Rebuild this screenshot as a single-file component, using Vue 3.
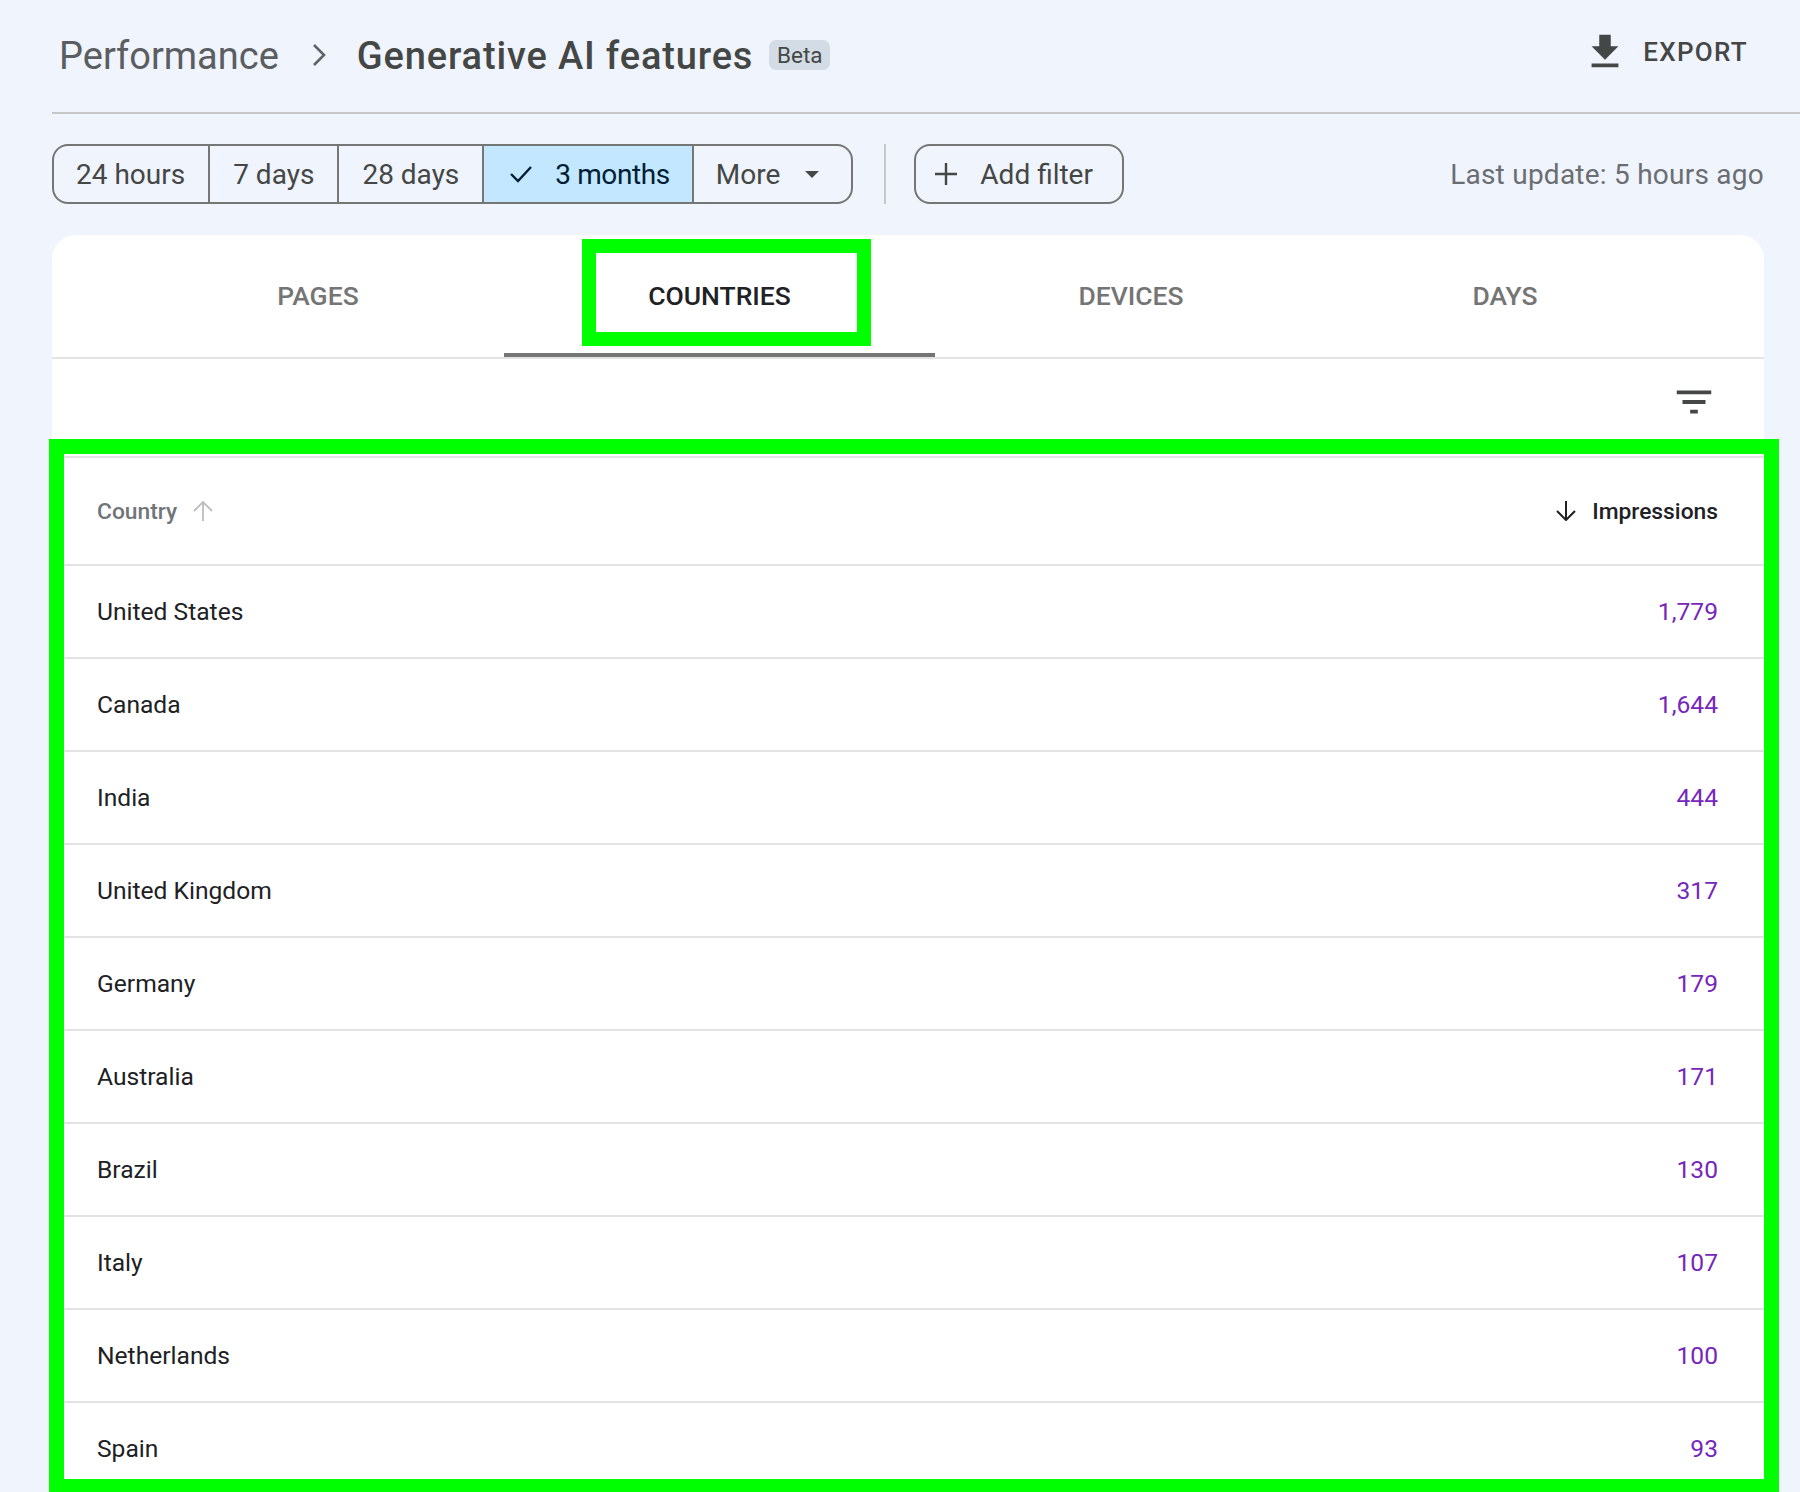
<template>
  <div class="page">
    <header class="head">
      <div class="crumbs">
        <span class="crumbs__root">Performance</span>
        <svg class="crumbs__chevron" viewBox="0 0 16 24" aria-hidden="true">
          <path d="M3 2l10 10L3 22" fill="none" stroke="#5f6368" stroke-width="2.6" />
        </svg>
        <span class="crumbs__title">Generative AI features</span>
        <span class="crumbs__chip">Beta</span>
      </div>
      <button class="export">
        <svg class="export__icon" viewBox="0 0 24 24" aria-hidden="true">
          <path d="M19 9h-4V3H9v6H5l7 7 7-7zM5 18v2h14v-2H5z" fill="#444746" />
        </svg>
        EXPORT
      </button>
    </header>

    <div class="toolbar">
      <div class="range">
        <div
          v-for="item in ranges"
          :key="item.label"
          class="range__item"
          :class="{ 'range__item--on': item.on, 'range__item--more': item.more }"
        >
          <svg v-if="item.on" class="range__check" viewBox="0 0 22 18" aria-hidden="true">
            <path d="M1 9l7 7L21 2" fill="none" stroke="#001d35" stroke-width="2.4" />
          </svg>
          <span>{{ item.label }}</span>
          <span v-if="item.more" class="range__caret"></span>
        </div>
      </div>
      <span class="toolbar__sep"></span>
      <button class="add">
        <svg class="add__icon" viewBox="0 0 24 24" aria-hidden="true">
          <path d="M12 1v22M1 12h22" fill="none" stroke="#444746" stroke-width="2.4" />
        </svg>
        Add filter
      </button>
      <span class="toolbar__update">Last update: 5 hours ago</span>
    </div>

    <section class="card">
      <nav class="tabs">
        <div
          v-for="tab in tabs"
          :key="tab.label"
          class="tabs__tab"
          :class="[tab.cls, { 'tabs__tab--on': tab.on }]"
        >
          {{ tab.label }}
        </div>
      </nav>

      <div class="tools">
        <svg class="tools__filter" viewBox="0 0 24 24" aria-hidden="true">
          <path d="M10 18h4v-2h-4v2zM3 6v2h18V6H3zm3 7h12v-2H6v2z" fill="#444746" />
        </svg>
      </div>

      <div class="table">
        <div class="row row--head">
          <div class="row__name">
            Country
            <svg class="row__sort" viewBox="0 0 20 20" aria-hidden="true">
              <path d="M10 20V1M1 10l9-9 9 9" fill="none" stroke="#bdbdbd" stroke-width="1.8" />
            </svg>
          </div>
          <div class="row__metric">
            <svg class="row__sort" viewBox="0 0 20 20" aria-hidden="true">
              <path d="M10 0v19M1 10l9 9 9-9" fill="none" stroke="#202124" stroke-width="2" />
            </svg>
            Impressions
          </div>
        </div>
        <div v-for="row in rows" :key="row.name" class="row">
          <div class="row__name">{{ row.name }}</div>
          <div class="row__value">{{ row.value }}</div>
        </div>
      </div>
    </section>

    <!-- green highlight boxes drawn over the screenshot -->
    <div class="mark mark--tab"></div>
    <div class="mark mark--table"></div>
  </div>
</template>

<script setup>
const ranges = [
  { label: "24 hours" },
  { label: "7 days" },
  { label: "28 days" },
  { label: "3 months", on: true },
  { label: "More", more: true },
];

const tabs = [
  { label: "PAGES", cls: "tabs__tab--pages" },
  { label: "COUNTRIES", cls: "tabs__tab--countries", on: true },
  { label: "DEVICES", cls: "tabs__tab--devices" },
  { label: "DAYS", cls: "tabs__tab--days" },
];

const rows = [
  { name: "United States", value: "1,779" },
  { name: "Canada", value: "1,644" },
  { name: "India", value: "444" },
  { name: "United Kingdom", value: "317" },
  { name: "Germany", value: "179" },
  { name: "Australia", value: "171" },
  { name: "Brazil", value: "130" },
  { name: "Italy", value: "107" },
  { name: "Netherlands", value: "100" },
  { name: "Spain", value: "93" },
];
</script>

<style>
html,
body {
  margin: 0;
  background: #f0f4fc;
}
</style>

<style scoped>
.page {
  position: relative;
  width: 1800px;
  height: 1492px;
  overflow: hidden;
  box-sizing: border-box;
  padding-left: 52px;
  background: #f0f4fc;
  font-family: Roboto, "Liberation Sans", sans-serif;
  color: #444746;
}

button {
  font-family: inherit;
  background: none;
  border: 0;
  padding: 0;
}

.head {
  height: 112px;
  display: flex;
  align-items: flex-start;
  justify-content: space-between;
  border-bottom: 2px solid #c7c7c7;
}

.crumbs {
  display: flex;
  align-items: center;
  height: 112px;
  padding-left: 7px;
  font-size: 38px;
}

.crumbs__root {
  color: #5a5d61;
}

.crumbs__chevron {
  width: 16px;
  height: 24px;
  margin: -2px 30px 0 32px;
}

.crumbs__title {
  color: #444746;
  font-weight: 500;
  letter-spacing: 0.85px;
}

.crumbs__chip {
  margin: -2px 0 0 16px;
  width: 61px;
  height: 30px;
  line-height: 30px;
  text-align: center;
  border-radius: 7px;
  background: #d3dbe5;
  font-size: 22.5px;
}

.export {
  display: flex;
  align-items: center;
  height: 104px;
  margin-right: 52px;
  font-size: 26px;
  font-weight: 500;
  letter-spacing: 1.3px;
  color: #444746;
}

.export__icon {
  width: 46px;
  height: 46px;
  margin-right: 15px;
}

.toolbar {
  display: flex;
  align-items: center;
  height: 60px;
  margin: 30px 36px 31px 0;
  font-size: 28px;
}

.range {
  display: flex;
  height: 60px;
  box-sizing: border-box;
  border: 2px solid #747775;
  border-radius: 16px;
  overflow: hidden;
}

.range__item {
  display: flex;
  align-items: center;
  padding: 0 23px;
  border-left: 2px solid #747775;
}

.range__item:first-child {
  border-left: 0;
  padding-left: 22px;
}

.range__item--on {
  padding: 0 22px 0 26px;
  background: #c2e7ff;
  color: #001d35;
  letter-spacing: -0.4px;
}

.range__check {
  width: 22px;
  height: 18px;
  margin-right: 23px;
}

.range__item--more {
  padding-left: 22px;
  padding-right: 32px;
}

.range__caret {
  width: 0;
  height: 0;
  margin-left: 25px;
  border-left: 7px solid transparent;
  border-right: 7px solid transparent;
  border-top: 7px solid #444746;
}

.toolbar__sep {
  width: 2px;
  height: 60px;
  margin: 0 28px 0 31px;
  background: #c7c7c7;
}

.add {
  display: flex;
  align-items: center;
  width: 210px;
  height: 60px;
  box-sizing: border-box;
  padding-left: 18px;
  border: 2px solid #747775;
  border-radius: 16px;
  font-size: 28px;
  color: #444746;
}

.add__icon {
  width: 24px;
  height: 24px;
  margin-right: 22px;
}

.toolbar__update {
  margin-left: auto;
  color: #6a6e73;
  letter-spacing: 0.24px;
}

.card {
  width: 1712px;
  background: #fff;
  border-radius: 24px 24px 0 0;
}

.tabs {
  display: flex;
  height: 124px;
  box-sizing: border-box;
  border-bottom: 2px solid #e3e3e3;
}

.tabs__tab {
  display: flex;
  align-items: center;
  justify-content: center;
  height: 122px;
  box-sizing: border-box;
  padding-bottom: 2px;
  font-size: 26.5px;
  font-weight: 500;
  color: #757575;
}

.tabs__tab--pages {
  width: 452px;
  padding-left: 80px;
}

.tabs__tab--countries {
  width: 431px;
}

.tabs__tab--devices {
  width: 392px;
}

.tabs__tab--days {
  width: 356px;
}

.tabs__tab--on {
  color: #202124;
  box-shadow: inset 0 -4px 0 #757575;
}

.tools {
  display: flex;
  justify-content: flex-end;
  align-items: center;
  height: 97px;
  padding-right: 47px;
}

.tools__filter {
  width: 46px;
  height: 46px;
  margin-top: -12px;
}

.table {
  border-top: 2px solid #e3e3e3;
}

.row {
  display: flex;
  align-items: center;
  justify-content: space-between;
  height: 93px;
  box-sizing: border-box;
  padding: 0 46px 0 45px;
  border-bottom: 2px solid #e3e3e3;
  font-size: 24.6px;
  color: #202124;
}

.row--head {
  height: 108px;
  font-size: 22.8px;
  font-weight: 500;
}

.row__name,
.row__metric {
  display: flex;
  align-items: center;
}

.row--head .row__name {
  color: #70757a;
}

.row__sort {
  width: 20px;
  height: 20px;
}

.row__name .row__sort {
  margin-left: 16px;
}

.row__metric .row__sort {
  margin-right: 16px;
}

.row__value {
  color: #7627bb;
}

.mark {
  position: absolute;
  box-sizing: border-box;
  border: 14px solid #00ff00;
}

.mark--tab {
  left: 582px;
  top: 239px;
  width: 289px;
  height: 107px;
}

.mark--table {
  left: 49px;
  top: 439px;
  width: 1730px;
  height: 1060px;
  border-width: 15px;
  border-bottom-width: 20px;
}
</style>
